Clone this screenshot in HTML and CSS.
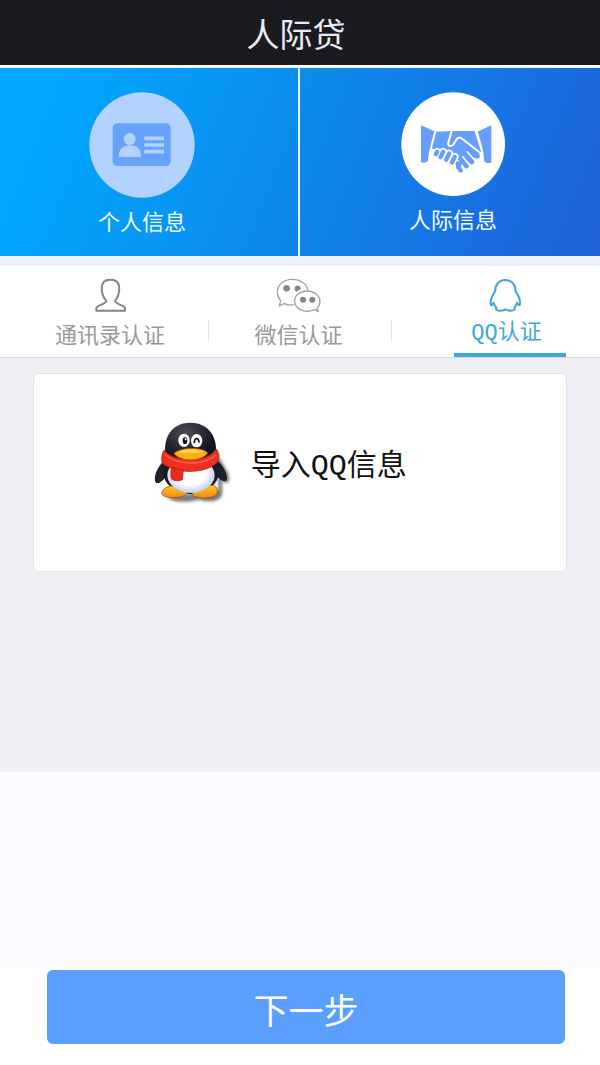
FILE: index.html
```html
<!DOCTYPE html>
<html lang="zh-CN">
<head>
  <meta charset="UTF-8">
  <meta name="viewport" content="width=device-width, initial-scale=1">
  <title>人际贷</title>
  <link rel="stylesheet" href="styles.css">
</head>
<body>
  <header class="header">
    <h1>人际贷</h1>
  </header>
  <nav class="steps">
    <a href="#personal" class="step step-personal">
      <svg width="106" height="106" viewBox="27 32 318 318" aria-hidden="true">
        <circle cx="186" cy="191" r="158" fill="#b4d2ff"/>
        <rect x="98" y="126" width="174" height="128" rx="14" fill="#66a3fd"/>
        <circle cx="149" cy="173" r="18" fill="#b4d2ff"/>
        <path d="M116 227c0-26 15-35 34-35s33 9 33 35z" fill="#b4d2ff"/>
        <path d="M193 171h59M193 191h59M193 211h59" stroke="#b4d2ff" stroke-width="11"/>
      </svg>
      <span>个人信息</span>
    </a>
    <a href="#relation" class="step step-relation">
      <svg width="104" height="104" viewBox="-42 -82 313 313" aria-hidden="true">
        <circle cx="115" cy="75" r="156" fill="#fff"/>
        <g fill="#669efa">
          <path d="M18 18l40 18c-6 28-17 58-19 90-6 6-15 6-21 3z"/>
          <path d="M230 18l-41 19c8 28 18 56 20 90 6 6 14 6 21 3z"/>
          <path d="M64 38l46-3h69l20 62-10 14-40 24-25-15-32-12-41-21z"/>
        </g>
        <!-- fingers of the right hand -->
        <g fill="none" stroke="#669efa" stroke-width="15" stroke-linecap="round">
          <path d="M164 88l24 23M150 104l21 24M135 114l20 27M128 130l9 23"/>
        </g>
        <g fill="none" stroke="#fff" stroke-width="5" stroke-linecap="round">
          <path d="M157 98l24 26M144 113l20 25M130 125l17 27"/>
        </g>
        <!-- fingers of the left hand -->
        <g fill="none" stroke="#fff" stroke-width="23" stroke-linecap="round">
          <path d="M67 98l-4 7M85 98l-8 16M103 103l-9 19M120 113l-9 17"/>
        </g>
        <g fill="none" stroke="#669efa" stroke-width="13" stroke-linecap="round">
          <path d="M67 98l-4 7M85 98l-8 16M103 103l-9 19M120 113l-9 17M136 130l-6 15"/>
        </g>
        <path d="M111 33l-11 39c0 11 12 11 16 3l10-16c6-6 14-3 20 3l49 38" fill="none" stroke="#fff" stroke-width="6" stroke-linecap="round"/>
      </svg>
      <span>人际信息</span>
    </a>
  </nav>
  <div class="tabs">
    <a href="#contacts" class="tab tab-contacts">
      <svg width="33" height="36" viewBox="280 66 98 107" fill="none" stroke="#858585" stroke-width="6" stroke-linejoin="round" aria-hidden="true">
        <path d="M329 74c-17 0-26 9-26 25 0 17 5 29 14 38-1 9-29 14-30 21v8h85v-8c-1-7-29-12-30-21 9-9 13-21 13-38 0-16-9-25-26-25z"/>
      </svg>
      <span class="tab-label">通讯录认证</span>
    </a>
    <a href="#wechat" class="tab tab-wechat">
      <svg width="46" height="36" viewBox="33 20 138 108" fill="none" stroke="#a3a3a3" stroke-width="4" stroke-linejoin="round" aria-hidden="true">
        <path d="M47 91c-7-8-10-17-10-26 0-22 20-38 45-38 24 0 43 13 46 32M47 91l-4 15 16-6c9 5 19 5 28 3"/>
        <path d="M149 118c-34 14-60-5-60-26 0-18 16-30 37-30s39 13 39 31c0 9-3 15-9 20l4 11z"/>
        <g fill="#858585" stroke="none">
          <circle cx="65" cy="54" r="10"/>
          <path d="M89 57c-3-16 20-15 19 0-7 1-10 5-13 8-3-2-5-4-6-8z"/>
          <circle cx="114" cy="88" r="9"/>
          <circle cx="142" cy="88" r="9"/>
        </g>
      </svg>
      <span class="tab-label">微信认证</span>
    </a>
    <a href="#qq" class="tab tab-qq active">
      <svg width="33" height="36" viewBox="27 20 99 108" fill="none" stroke="#3ea7dc" stroke-width="6" stroke-linejoin="round" stroke-linecap="round" aria-hidden="true">
        <path d="M76 29c-20 0-31 15-31 35-9 12-14 26-13 38 2 6 6 0 9-5 2 7 4 12 8 15-6 10 14 12 27 5 13 7 33 5 27-5 4-3 6-8 8-15 3 5 7 11 9 5 1-12-4-26-13-38 0-20-11-35-31-35z"/>
      </svg>
      <span class="tab-label"><span class="latin">QQ</span>认证</span>
    </a>
  </div>
  <main class="content">
    <button type="button" class="import-card">
      <svg width="110" height="105" viewBox="0 0 330 315" aria-hidden="true">
        <defs>
          <filter id="soft" x="-20%" y="-20%" width="140%" height="140%"><feGaussianBlur stdDeviation="5"/></filter>
          <radialGradient id="head" cx="40%" cy="25%" r="60%"><stop offset="0" stop-color="#4a4e59"/><stop offset="1" stop-color="#11131b"/></radialGradient>
          <radialGradient id="belly" cx="48%" cy="45%" r="55%"><stop offset=".6" stop-color="#fff"/><stop offset="1" stop-color="#bccde2"/></radialGradient>
          <linearGradient id="foot" x1="0" y1="0" x2="0" y2="1"><stop offset="0" stop-color="#ffc529"/><stop offset="1" stop-color="#f18a08"/></linearGradient>
        </defs>
        <path d="M225 110c2 40 45 70 39 101-4 15-18 4-22 0 3 18 1 30 2 40-3 25-45 27-70 18-30 8-80 11-96-8l155-22z" fill="#333" opacity=".65" filter="url(#soft)"/>
        <path d="M73 148c-20 19-34 44-31 64 4 14 17 5 25-3l29-35zM222 145c22 17 37 45 36 62-2 13-17 5-25-3l-33-37z" fill="#1d202b"/>
        <ellipse cx="150" cy="188" rx="83" ry="64" fill="#171a23"/>
        <path d="M86 228c-19 6-26 17-23 25 5 14 66 14 75-3 3-8-4-12-14-14-14-2-22-9-38-8zM217 226c13 5 13 16 11 24-4 16-66 20-74 3-1-12 12-13 24-18 13-6 25-10 39-9z" fill="url(#foot)" stroke="#8a4c08" stroke-width="2"/>
        <path d="M148 38c-47 0-76 33-76 80 0 30 30 45 76 45s77-15 77-45c0-47-30-80-77-80z" fill="url(#head)"/>
        <ellipse cx="150" cy="196" rx="71" ry="53" fill="url(#belly)"/>
        <ellipse cx="129" cy="91" rx="17" ry="20" fill="#fff"/>
        <ellipse cx="167" cy="92" rx="17" ry="20" fill="#fff"/>
        <ellipse cx="132" cy="92" rx="7" ry="10" fill="#111"/>
        <circle cx="134" cy="88" r="3" fill="#fff"/>
        <path d="M160 97c1-15 12-15 14-1" fill="none" stroke="#111" stroke-width="5" stroke-linecap="round"/>
        <path d="M69 120c28 37 126 42 157-3 7 8 10 24 6 35-27 39-124 44-168 8-5-14-1-30 5-40z" fill="#ed3021" stroke="#a51c15" stroke-width="2"/>
        <path d="M92 172c-3 11-4 23-1 34 8 8 25 8 33 3 2-9 1-19 3-29z" fill="#e92a1b" stroke="#a51c15" stroke-width="2"/>
        <path d="M73 136c40 31 115 31 153-2" fill="none" stroke="#ff6542" stroke-width="4"/>
        <path d="M99 130c18-18 82-20 101-2-12 25-83 30-101 2z" fill="#ffae18" stroke="#b86507" stroke-width="2"/>
        <path d="M112 126c18-9 55-10 75-1-20 5-56 6-75 1z" fill="#ffd44d"/>
      </svg>
      <span>导入<span class="latin">QQ</span>信息</span>
    </button>
  </main>
  <div class="spacer"></div>
  <footer class="footer">
    <button type="button" class="next-btn">下一步</button>
  </footer>
</body>
</html>
```
FILE: styles.css
```css
* { box-sizing: border-box;}
body { margin: 0; background: #fff; font-family: "Noto Sans CJK SC", sans-serif;}
a { text-decoration: none;}
svg { display: block; flex: none;}
.latin { font-family: "Liberation Mono", monospace; line-height: 1;}
.header { display: flex; align-items: center; justify-content: center; height: 65px; padding-right: 8px; background: #1b1b1f;}
.header h1 { margin: 0; font-size: 33px; line-height: 40px; font-weight: normal; color: #e6ecfa;}
.steps { display: grid; grid-template-columns: 1fr 1fr; border-top: 3px solid #f2fdff; background: linear-gradient(112deg, #00a8ff 8%, #0c8bed 48%, #1a6ce0 84%, #1f62d6);}
.step { display: flex; flex-direction: column; align-items: center; gap: 8px; height: 188px; padding-top: 24px; color: #f2fdff; font-size: 22px; line-height: 28px;}
.step-personal { padding-right: 14px; border-right: 2px solid #e2faff;}
.step-relation { padding-left: 6px;}
.tabs { display: grid; grid-template-columns: 208fr 183fr 209fr; border-top: 10px solid #eef1fa; border-bottom: 1px solid #d9d9dc; background: #fff;}
.tab { position: relative; display: flex; flex-direction: column; align-items: center; gap: 6px; height: 91px; padding-top: 11px; color: #999; font-size: 22px; line-height: 28px;}
.tab + .tab::before { content: ""; position: absolute; left: 0; top: 54px; width: 1px; height: 22px; background: #e4e4e4;}
.tab-contacts { padding-left: 12px;}
.tab-wechat { padding-right: 2px;}
.tab-qq { padding-left: 28px;}
.tab-qq svg { margin-right: 8px;}
.tab.active { gap: 2px; color: #3ea7dc;}
.tab.active .tab-label { width: 112px; height: 42px; padding-right: 6px; border-bottom: 4px solid #3ea7dc; text-align: center;}
.content { min-height: 414px; padding: 15px 33px; background: #efeef3;}
.import-card { display: flex; align-items: center; width: 100%; padding: 36px 20px 56px 20%; border: 1px solid #e2e2e5; border-radius: 6px; background: #fff; color: #111; font-family: inherit; font-size: 30px; line-height: 36px; cursor: pointer;}
.spacer { height: 196px; background: #fcfbff;}
.footer { padding: 2px 35px 21px 47px;}
.next-btn { display: block; width: 100%; height: 74px; padding: 4px 0 0; border: none; border-radius: 6px; background: #5b9ffe; color: #fff; font-family: inherit; font-size: 35px; line-height: 44px; cursor: pointer;}
```
